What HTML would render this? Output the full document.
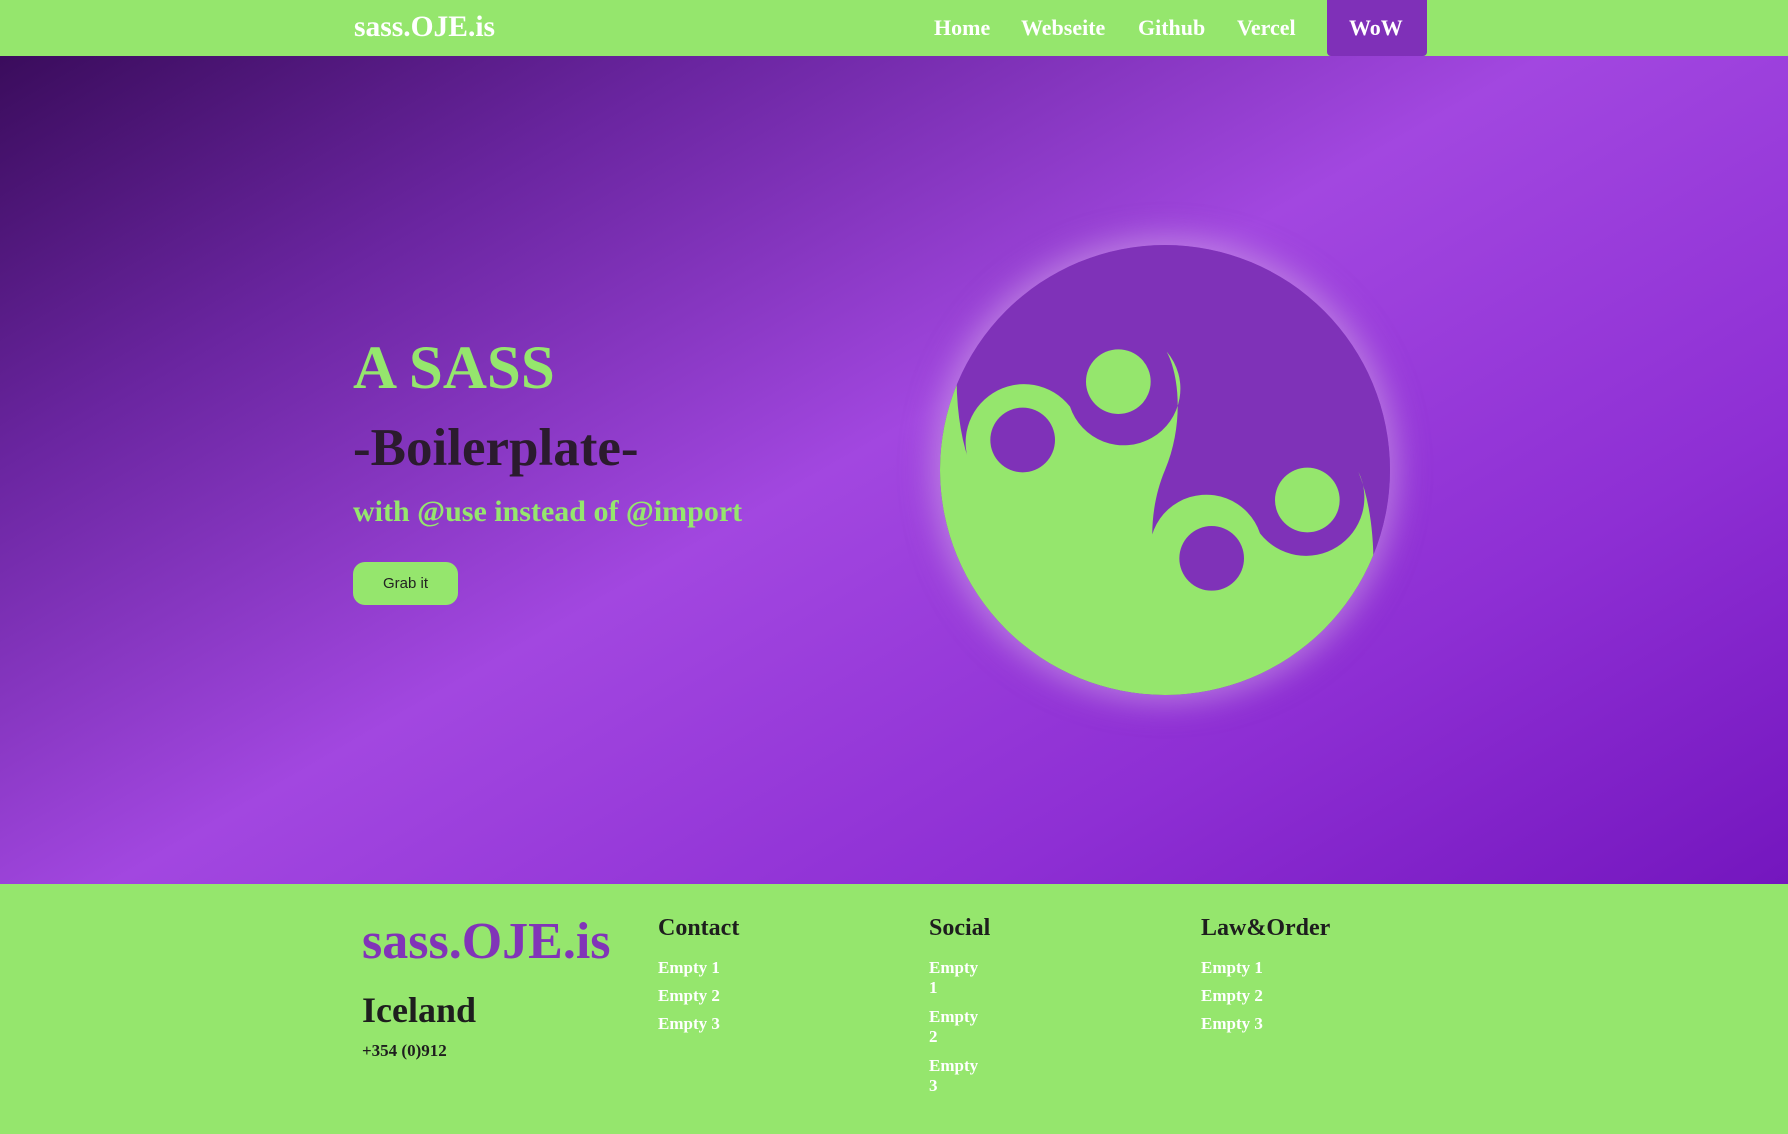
<!DOCTYPE html>
<html><head><meta charset="utf-8"><style>
*{margin:0;padding:0;box-sizing:border-box}
body{width:1788px;height:1134px;overflow:hidden;position:relative;font-family:"Liberation Serif",serif;font-weight:bold;background:#95e66d}
.a{position:absolute;line-height:1;white-space:nowrap}
nav{position:absolute;left:0;top:0;width:1788px;height:56px;background:#95e66d;z-index:2}
.hero{position:absolute;left:0;top:56px;width:1788px;height:828px;background:linear-gradient(150deg,#3a0c5c 0%,#6a25a0 22%,#a247e0 48%,#8e2fd4 75%,#7416be 100%)}
.w{color:#fff}
</style></head><body>
<nav>
<div class="a w" style="left:354px;top:13px;font-size:29.5px">sass.OJE.is</div>
<div class="a w" style="left:934px;top:17px;font-size:22px">Home</div>
<div class="a w" style="left:1021px;top:17px;font-size:22px">Webseite</div>
<div class="a w" style="left:1138px;top:17px;font-size:22px">Github</div>
<div class="a w" style="left:1237px;top:17px;font-size:22px">Vercel</div>
<div style="position:absolute;left:1327px;top:0;width:100px;height:56px;background:#7f30b8;border-radius:0 0 4px 4px"></div>
<div class="a w" style="left:1349px;top:17px;font-size:22px">WoW</div>
</nav>
<div class="hero"></div>
<div class="a" style="left:353px;top:338px;font-size:61px;color:#95e66d">A SASS</div>
<div class="a" style="left:353px;top:422px;font-size:53px;color:#2b1b2e">-Boilerplate-</div>
<div class="a" style="left:353px;top:497px;font-size:30px;color:#95e66d">with @use instead of @import</div>
<div style="position:absolute;left:353px;top:562px;width:105px;height:43px;border-radius:12px;background:#95e66d;font:15px 'Liberation Sans',sans-serif;color:#222;display:flex;align-items:center;justify-content:center">Grab it</div>

<div style="position:absolute;left:940px;top:245px;width:450px;height:450px;border-radius:50%;box-shadow:0 0 30px 8px rgba(210,170,230,0.55)"></div>
<svg style="position:absolute;left:900px;top:220px" width="520" height="500" viewBox="0 0 1560 1500">
<defs><clipPath id="c"><circle cx="795" cy="750" r="675"/></clipPath></defs>
<circle cx="795" cy="750" r="675" fill="#7f32b8"/>
<path clip-path="url(#c)" fill="#95e66d" d="M170,430 Q165,620 215,745 A175,175 0 0 1 510,560 A170,170 0 1 0 800,395 C840,470 850,620 795,750 C740,880 750,1030 790,1105 A170,170 0 1 1 1080,940 A175,175 0 0 0 1375,755 Q1425,880 1420,1070 L1500,1500 L0,1500 L0,430 Z"/>
<circle cx="655" cy="485" r="97" fill="#95e66d"/>
<circle cx="368" cy="660" r="97" fill="#7f32b8"/>
<circle cx="1222" cy="840" r="97" fill="#95e66d"/>
<circle cx="935" cy="1015" r="97" fill="#7f32b8"/>
</svg>

<div class="a" style="left:362px;top:916px;font-size:52px;color:#8134b8">sass.OJE.is</div>
<div class="a" style="left:362px;top:992px;font-size:36px;color:#1e1e1e">Iceland</div>
<div class="a" style="left:362px;top:1042px;font-size:17px;color:#1e1e1e">+354 (0)912</div>

<div class="a" style="left:658px;top:916px;font-size:24px;color:#1e1e1e">Contact</div>
<div class="a w" style="left:658px;top:959px;font-size:17px">Empty 1</div>
<div class="a w" style="left:658px;top:987px;font-size:17px">Empty 2</div>
<div class="a w" style="left:658px;top:1015px;font-size:17px">Empty 3</div>

<div class="a" style="left:929px;top:916px;font-size:24px;color:#1e1e1e">Social</div>
<div class="a w" style="left:929px;top:959px;font-size:17px">Empty</div>
<div class="a w" style="left:929px;top:979px;font-size:17px">1</div>
<div class="a w" style="left:929px;top:1008px;font-size:17px">Empty</div>
<div class="a w" style="left:929px;top:1028px;font-size:17px">2</div>
<div class="a w" style="left:929px;top:1057px;font-size:17px">Empty</div>
<div class="a w" style="left:929px;top:1077px;font-size:17px">3</div>

<div class="a" style="left:1201px;top:916px;font-size:24px;color:#1e1e1e">Law&amp;Order</div>
<div class="a w" style="left:1201px;top:959px;font-size:17px">Empty 1</div>
<div class="a w" style="left:1201px;top:987px;font-size:17px">Empty 2</div>
<div class="a w" style="left:1201px;top:1015px;font-size:17px">Empty 3</div>
</body></html>
